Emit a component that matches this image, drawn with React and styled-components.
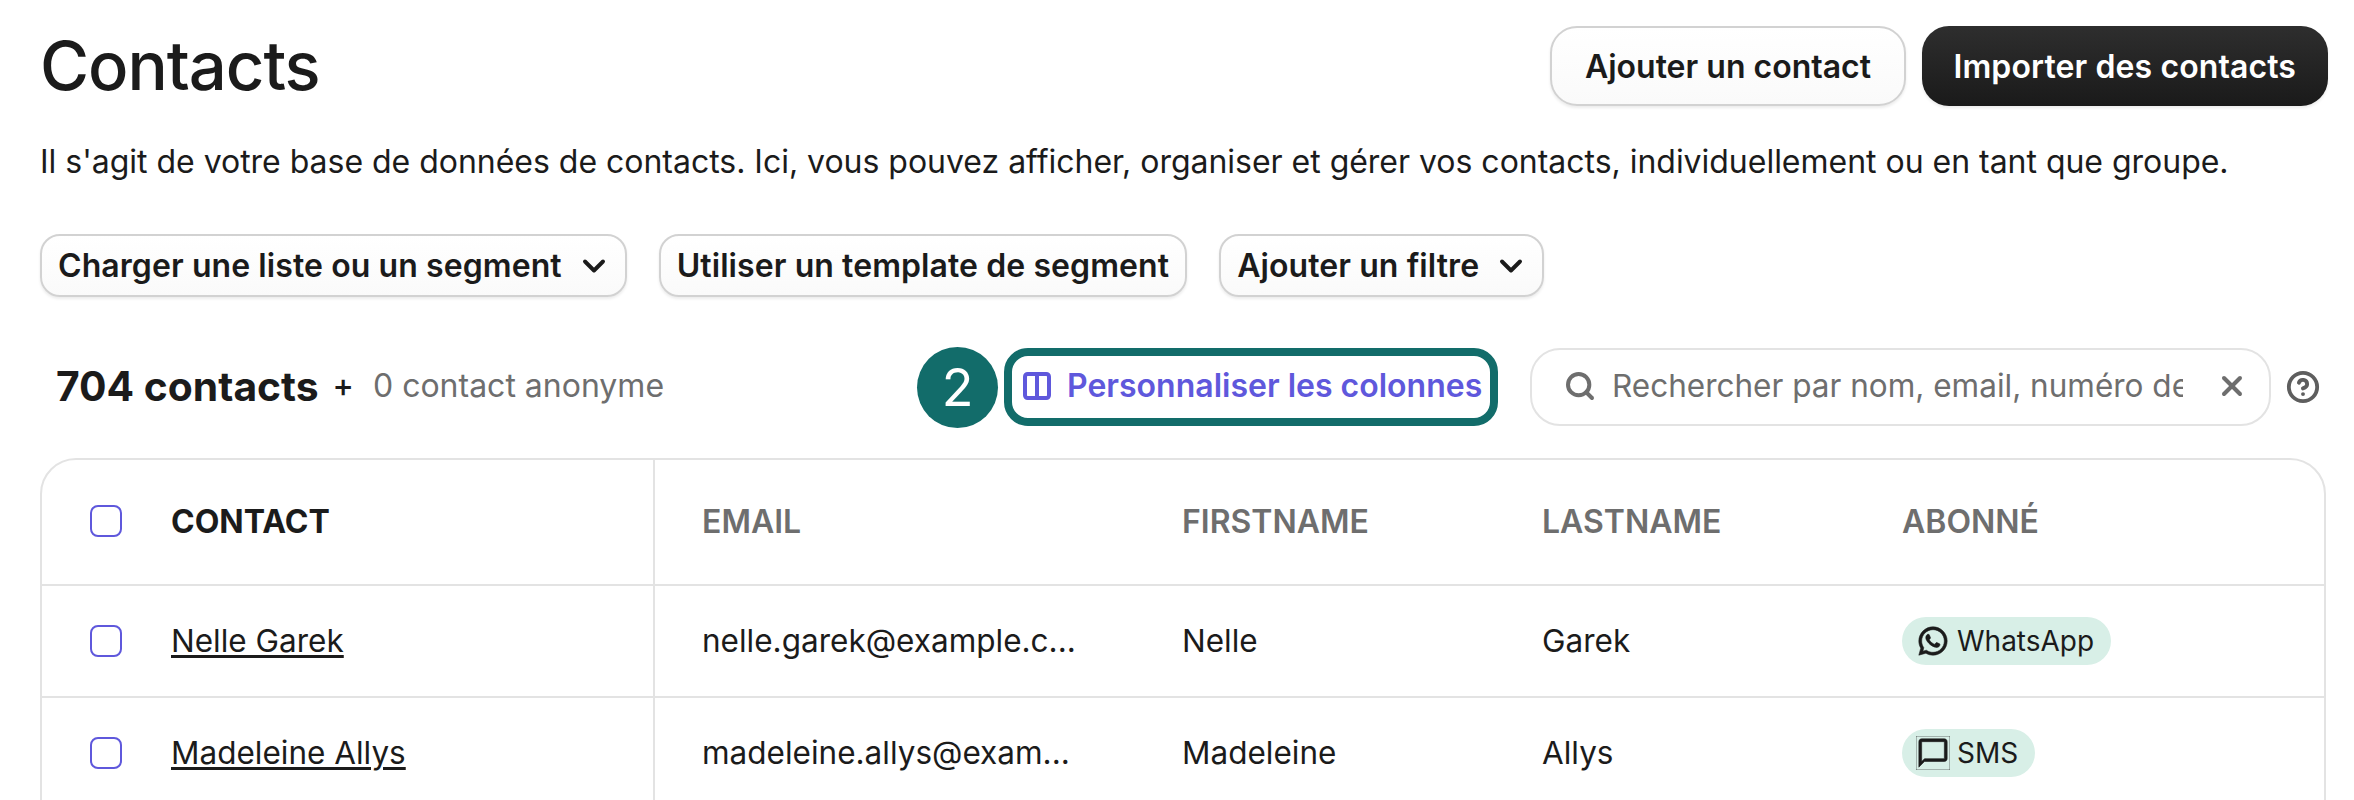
import React from "react";
import styled, { createGlobalStyle } from "styled-components";
import { Columns2, Search, X, CircleHelp, ChevronDown } from "lucide-react";
import { RiWhatsappLine } from "react-icons/ri";
import { MdChatBubbleOutline } from "react-icons/md";

const Global = createGlobalStyle`
  html, body { margin: 0; padding: 0; height: 800px; overflow: hidden; background: #fff; }
  body { font-family: Inter, "Liberation Sans", sans-serif; color: #1b1b1b; }
  * { box-sizing: border-box; }
`;
const Page = styled.div`
  height: 800px; overflow: hidden; padding: 26px 26px 0 40px;
`;
const Header = styled.header`
  display: flex; align-items: center; justify-content: space-between; height: 80px;
`;
const Title = styled.h1`
  margin: 0; font-size: 67px; font-weight: 450; line-height: 80px; letter-spacing: -1.05px; color: #1b1b1b;
`;
const Actions = styled.div`display: flex; gap: 16px;`;
const ActionButton = styled.button`
  height: 80px; padding: 0 ${p => (p.$dark ? "32px" : "32.5px")}; border-radius: 27px; font: 600 32px Inter, sans-serif;
  letter-spacing: ${p => (p.$dark ? "0.1px" : "0")};
  color: ${p => (p.$dark ? "#fff" : "#1b1b1b")};
  background: ${p => (p.$dark ? "linear-gradient(#2e2e2e,#1a1a1a)" : "linear-gradient(#fff,#fafafa)")};
  border: ${p => (p.$dark ? "0" : "2px solid #d2d2d2")};
  box-shadow: 0 2px 3px rgba(0,0,0,.08);
`;
const Description = styled.p`
  margin: 38px 0 0; font-size: 32px; line-height: 36px; letter-spacing: -0.02px; white-space: nowrap; color: #1b1b1b;
`;
const Filters = styled.div`display: flex; gap: 32px; margin-top: 54px;`;
const FilterButton = styled.button`
  display: flex; align-items: center; gap: 14px; height: 63px; padding: 0 ${p => (p.$chevron ? "13px" : "16px")} 0 16px; border-radius: 20px;
  font: 600 32px Inter, sans-serif; letter-spacing: 0.08px; color: #1b1b1b; white-space: nowrap;
  background: linear-gradient(#fff,#fafafa); border: 2px solid #d2d2d2; box-shadow: 0 2px 3px rgba(0,0,0,.08);
`;
const Toolbar = styled.div`
  display: flex; align-items: center; height: 82px; margin-top: 49px; padding: 0 8px 0 16px;
`;
const Count = styled.strong`font-size: 40.8px; font-weight: 700; color: #1b1b1b; padding-bottom: 3px;`;
const Plus = styled.span`font-size: 32px; font-weight: 500; margin: 0 19px 0 14px; padding-bottom: 3px;`;
const Anonymous = styled.span`font-size: 32px; color: #6e6e6e; padding-bottom: 3px;`;
const Spacer = styled.div`flex: 1;`;
const StepBadge = styled.div`
  width: 81px; height: 81px; border-radius: 50%; background: #126c6a; color: #fff;
  display: flex; align-items: center; justify-content: center; font-size: 52px; font-weight: 400;
`;
const Highlight = styled.button`
  display: flex; align-items: center; gap: 14px; width: 494px; height: 78px; margin: 0 32px 0 6px; padding: 0 0 3px 9px;
  border: 8px solid #126c6a; border-radius: 24px; background: #fff; color: #5f58dc;
  font: 600 32px Inter, sans-serif; white-space: nowrap;
`;
const SearchBox = styled.div`
  display: flex; align-items: center; width: 741px; height: 78px; padding: 0 21px 3px 32px; gap: 16px;
  border: 2px solid #e3e3e3; border-radius: 30px; color: #6e6e6e;
`;
const SearchText = styled.span`
  flex: none; width: 571px; overflow: hidden; white-space: nowrap; font-size: 31.5px; color: #6e6e6e;
`;
const ClearIcon = styled(X)`margin-left: auto;`;
const Help = styled.div`margin-left: 15px; display: flex; color: #5e5e5e;`;
const Table = styled.div`
  margin-top: 30px; width: 2286px; height: 420px; border: 2px solid #e3e3e3; border-radius: 36px; overflow: hidden;
`;
const Row = styled.div`
  display: grid; grid-template-columns: 613px 527px 360px 360px 1fr; height: ${p => (p.$head ? "126px" : "112px")};
  border-bottom: 2px solid #e3e3e3;
`;
const StickyCell = styled.div`
  display: flex; align-items: center; padding: 0 0 ${p => (p.$head ? "2px" : "1px")} 48px; gap: 49px; border-right: 2px solid #e3e3e3;
`;
const Cell = styled.div`
  display: flex; align-items: center; padding: 0 0 1px ${p => (p.$first ? "47px" : "0")}; font-size: 31.5px; color: #1b1b1b;
`;
const HeadCell = styled(Cell)`
  padding-bottom: 2px; font-size: 32px; font-weight: 600; color: #6e6e6e;
`;
const HeadContact = styled.span`font-size: 32px; font-weight: 700; color: #1b1b1b;`;
const Check = styled.span`
  display: block; width: 32px; height: 32px; border: 2px solid #5f58dc; border-radius: 8px; background: #fff;
`;
const NameLink = styled.a`
  font-size: 31.5px; color: #1b1b1b; text-decoration: underline; text-decoration-thickness: 3px; text-underline-offset: 3px;
`;
const Tag = styled.span`
  display: inline-flex; align-items: center; gap: 7px; height: 48px; padding: 0 17px 0 14px; border-radius: 24px;
  background: #d8efe7; font-size: 28px; color: #1b1b1b;
  svg { stroke: currentColor; stroke-width: 0.4; }
`;

const rows = [
  { name: "Nelle Garek", email: "nelle.garek@example.c...", first: "Nelle", last: "Garek", tag: "WhatsApp", Icon: RiWhatsappLine },
  { name: "Madeleine Allys", email: "madeleine.allys@exam...", first: "Madeleine", last: "Allys", tag: "SMS", Icon: MdChatBubbleOutline },
];

export default function App() {
  return (
    <Page>
      <Global />
      <Header>
        <Title>Contacts</Title>
        <Actions>
          <ActionButton>Ajouter un contact</ActionButton>
          <ActionButton $dark>Importer des contacts</ActionButton>
        </Actions>
      </Header>
      <Description>Il s'agit de votre base de données de contacts. Ici, vous pouvez afficher, organiser et gérer vos contacts, individuellement ou en tant que groupe.</Description>
      <Filters>
        <FilterButton $chevron>Charger une liste ou un segment <ChevronDown size={36} strokeWidth={2.6} /></FilterButton>
        <FilterButton>Utiliser un template de segment</FilterButton>
        <FilterButton $chevron>Ajouter un filtre <ChevronDown size={36} strokeWidth={2.6} /></FilterButton>
      </Filters>
      <Toolbar>
        <Count>704 contacts</Count>
        <Plus>+</Plus>
        <Anonymous>0 contact anonyme</Anonymous>
        <Spacer />
        <StepBadge>2</StepBadge>
        <Highlight><Columns2 size={32} strokeWidth={3} />Personnaliser les colonnes</Highlight>
        <SearchBox>
          <Search size={32} strokeWidth={3} />
          <SearchText>Rechercher par nom, email, numéro de téléphone</SearchText>
          <ClearIcon size={32} strokeWidth={3} />
        </SearchBox>
        <Help><CircleHelp size={34} strokeWidth={2.7} /></Help>
      </Toolbar>
      <Table>
        <Row $head>
          <StickyCell $head><Check /><HeadContact>CONTACT</HeadContact></StickyCell>
          <HeadCell $first>EMAIL</HeadCell>
          <HeadCell>FIRSTNAME</HeadCell>
          <HeadCell>LASTNAME</HeadCell>
          <HeadCell>ABONNÉ</HeadCell>
        </Row>
        {rows.map(r => (
          <Row key={r.name}>
            <StickyCell><Check /><NameLink>{r.name}</NameLink></StickyCell>
            <Cell $first>{r.email}</Cell>
            <Cell>{r.first}</Cell>
            <Cell>{r.last}</Cell>
            <Cell><Tag><r.Icon size={34} />{r.tag}</Tag></Cell>
          </Row>
        ))}
      </Table>
    </Page>
  );
}
